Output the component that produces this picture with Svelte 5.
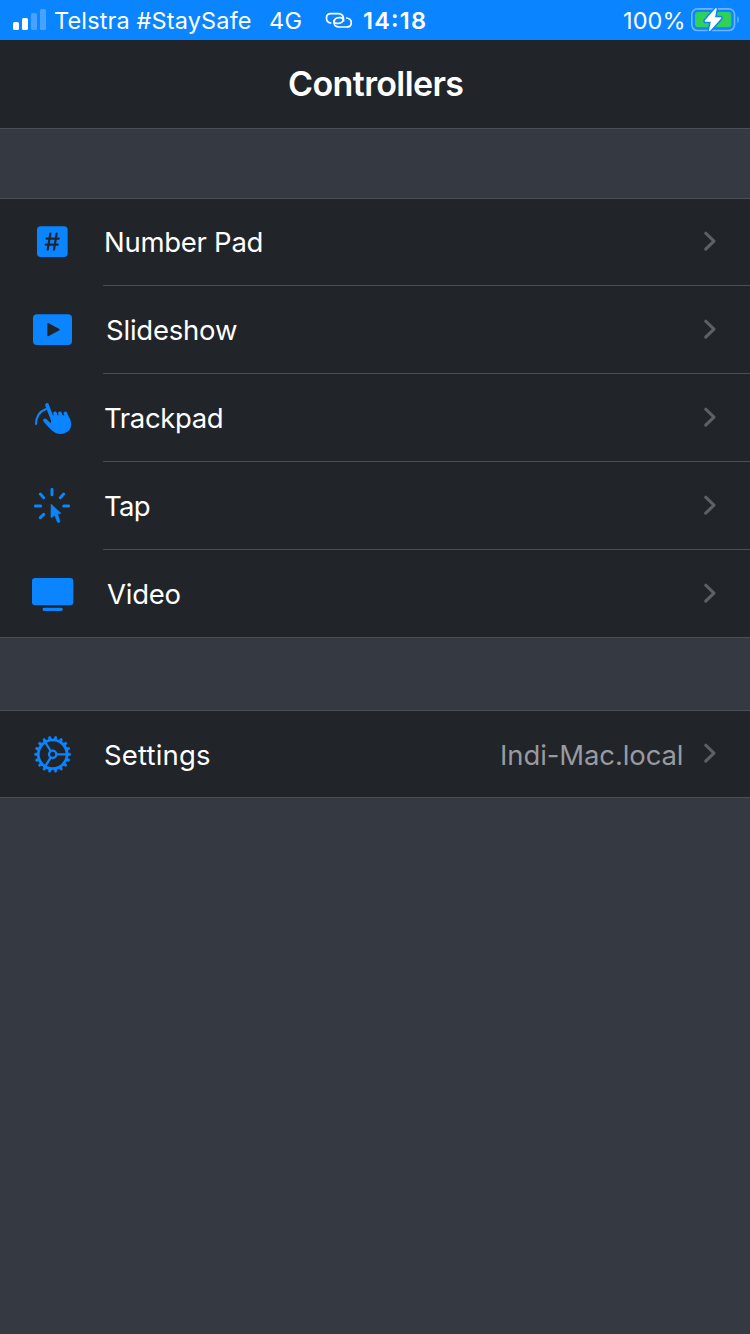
<script>
  const controllers = [
    { icon: 'number', label: 'Number Pad', inset: 103.6, width: 159.4 },
    { icon: 'slides', label: 'Slideshow', inset: 106.4, width: 131.4 },
    { icon: 'track', label: 'Trackpad', inset: 104, width: 119.6 },
    { icon: 'tap', label: 'Tap', inset: 104, width: 46.5 },
    { icon: 'video', label: 'Video', inset: 107.4, width: 74 }
  ];
  const teeth = Array.from({ length: 18 }, (_, i) => i * 20);
</script>

{#snippet chevron()}
  <svg class="chevron" width="16" height="24" viewBox="0 0 16 24"><path d="M2.7 4.2 L11 12.2 L2.7 20.2" fill="none" stroke="#5d6065" stroke-width="3" stroke-linecap="round" stroke-linejoin="round" /></svg>
{/snippet}

{#snippet glyph(name)}
  <svg class="icon {name}" width="64" height="60" viewBox="0 0 192 180" fill="#0a84ff" stroke="#0a84ff" stroke-width="0">
    {#if name === 'number'}
      <rect x="51" y="49" width="92" height="92" rx="11" />
      <path d="M91 71 L83 119 M110 71 L102 119 M80 86 H116 M77 104 H113" stroke="#212429" stroke-width="6.5" stroke-linecap="round" />
    {:else if name === 'slides'}
      <rect x="39" y="43" width="117" height="92" rx="12" />
      <path d="M84 71 L117 89 L84 107 Z" fill="#212429" stroke="#212429" stroke-width="4" stroke-linejoin="round" />
    {:else if name === 'track'}
      <path d="M48 102 C48 80 60 64 78 57" fill="none" stroke-width="6" stroke-linecap="round" />
      <path d="M81 45 L99 92 M105 70 L110 88 M120 70 L126 88 M136 70 L143 86 M75 91 L98 112" fill="none" stroke-width="11" stroke-linecap="round" />
      <path d="M93 76 H138 L149 85 C157 102 154 116 144 124 C132 134 113 134 101 125 C90 117 79 105 72 95 L93 99 Z" />
    {:else if name === 'tap'}
      <path d="M96 43 V59 M61 57 L71 68 M131 57 L121 68 M46 93 H62 M131 93 H146 M61 128 L71 118" fill="none" stroke-width="9" stroke-linecap="round" />
      <path d="M93 87 L123 115 L113 117 L120 138 C121 141 114 145 112 141 L104 121 L95 128 Q93 129 93 126 Z" stroke-width="1.5" />
    {:else if name === 'video'}
      <rect x="36" y="39" width="124" height="82" rx="9" />
      <rect x="68" y="128" width="60" height="10" rx="4" />
    {:else}
      <circle cx="98" cy="88" r="43" fill="none" stroke-width="8" />
      <circle cx="98" cy="88" r="11" fill="none" stroke-width="7" />
      <path d="M109 88 H141 M92 78 L75 51 M92 98 L75 125" stroke-width="7" />
      {#each teeth as a}
        <path d="M93 44 L95.5 34 H100.5 L103 44 Z" stroke-width="2" transform="rotate({a + 10} 98 88)" />
      {/each}
    {/if}
  </svg>
{/snippet}

{#snippet fitted(label, width, size, weight)}
  <svg class="text" {width} height="40" style:font-size="{size}px" style:font-weight={weight}>
    <text x="0" y="30" textLength={width} fill="currentColor">{label}</text>
  </svg>
{/snippet}

<div class="screen">
  <header class="status">
    <svg class="signal" width="34" height="40" viewBox="0 0 34 40" fill="#fff">
      <rect x="1" y="22" width="6" height="8" rx="1.6" />
      <rect x="10" y="18" width="6" height="12" rx="1.6" />
      <rect x="19" y="13" width="6" height="17" rx="1.6" opacity=".25" />
      <rect x="28" y="9" width="6" height="21" rx="1.6" opacity=".25" />
    </svg>
    <span class="carrier">{@render fitted('Telstra #StaySafe', 197.5, 23.5, 400)}</span>
    <span class="network">{@render fitted('4G', 33, 23.5, 400)}</span>
    <svg class="link" width="28" height="18" viewBox="0 0 84 54" fill="none" stroke="#fff" stroke-width="5" stroke-linecap="round">
      <path d="M17 33 C0 30 0 5 18 5 H40 C61 5 60 34 40 34 H36 C30 34 27 30 27 26" />
      <path d="M65 18 C84 21 83 45 65 45 H42 C22 45 21 17 42 17 H46 C52 17 56 21 56 26" />
    </svg>
    <span class="time">{@render fitted('14:18', 63, 23.5, 600)}</span>
    <span class="percent">{@render fitted('100%', 62.5, 23.5, 400)}</span>
    <svg class="battery" width="50" height="40" viewBox="0 0 150 120">
      <rect x="5.5" y="26.5" width="128" height="65" rx="17" fill="none" stroke="#6db5ff" stroke-width="5" />
      <path d="M142 49 Q147 52 147 59 Q147 66 142 69 Z" fill="#6db5ff" />
      <rect x="15" y="36" width="109" height="46" rx="9" fill="#30d158" />
      <path d="M78 26 L46 63 H65 L59 91 L92 54 H73 Z" fill="#0a84ff" stroke="#0a84ff" stroke-width="13" stroke-linejoin="round" />
      <path d="M78 26 L46 63 H65 L59 91 L92 54 H73 Z" fill="#fff" stroke="#fff" stroke-width="4" stroke-linejoin="round" />
    </svg>
  </header>

  <div class="nav">{@render fitted('Controllers', 176, 34, 600)}</div>

  <main>
    <section class="group">
      {#each controllers as item}
        <div class="row">
          {@render glyph(item.icon)}
          <div class="body">
            <span class="label" style:padding-left="{item.inset - 103}px">{@render fitted(item.label, item.width, 27.5, 400)}</span>
            {@render chevron()}
          </div>
        </div>
      {/each}
    </section>
    <section class="group settings">
      <div class="row">
        {@render glyph('gear')}
        <div class="body">
          <span class="label one">{@render fitted('Settings', 106.5, 27.5, 400)}</span>
          <span class="value">{@render fitted('Indi-Mac.local', 183.5, 27.5, 400)}</span>
          {@render chevron()}
        </div>
      </div>
    </section>
  </main>
</div>

<style>
  :global(body) { margin: 0; background: #353941; }
  .screen { box-sizing: border-box; width: 750px; height: 1334px; background: #353941; color: #fff; font-family: Inter, "Liberation Sans", sans-serif; overflow: hidden; }
  svg { display: block; flex: none; }
  .text { overflow: visible; }
  .status { height: 40px; display: flex; align-items: flex-start; background: #0a84ff; padding-left: 12px; }
  .status .text { margin-top: -1px; }
  .carrier { margin-left: 8px; }
  .network { margin-left: 17.5px; }
  .link { margin: 12px 0 0 23px; }
  .time { margin-left: 10px; }
  .percent { margin-left: auto; }
  .battery { margin: 0 10px 0 4.5px; }
  .nav { height: 88px; display: flex; justify-content: center; align-items: flex-start; background: #212429; }
  .nav .text { margin: 26px 0 0 1px; }
  main { padding-top: 70px; border-top: 1px solid #4b4f55; }
  .group { margin-top: -1px; border-top: 1px solid #4b4f55; border-bottom: 1px solid #4b4f55; background: #212429; }
  .settings { margin-top: 72px; }
  .row { height: 88px; display: flex; align-items: flex-start; padding-left: 20px; box-sizing: border-box; }
  .row:first-child, .row:last-child { height: 87px; }
  .settings .row { height: 86px; }
  .icon { margin: 13px 19px 0 0; }
  .number { margin-top: 11px; }
  .slides, .gear { margin-top: 14px; }
  .track { margin-top: 16px; }
  .video { margin-top: 15px; }
  .body { box-sizing: border-box; height: 100%; flex: 1; display: flex; align-items: flex-start; border-bottom: 1px solid #4b4f55; padding-right: 31px; }
  .row:last-child .body { border-bottom: 0; }
  .label { margin-top: 24px; margin-right: auto; }
  .row:first-child .label { margin-top: 23px; }
  .chevron { margin-top: 31px; }
  .row:first-child .chevron { margin-top: 30px; }
  .one { padding-left: 1px; }
  .settings .row .label, .value { margin-top: 24px; }
  .value { color: #989a9f; margin-right: 20px; }
</style>
